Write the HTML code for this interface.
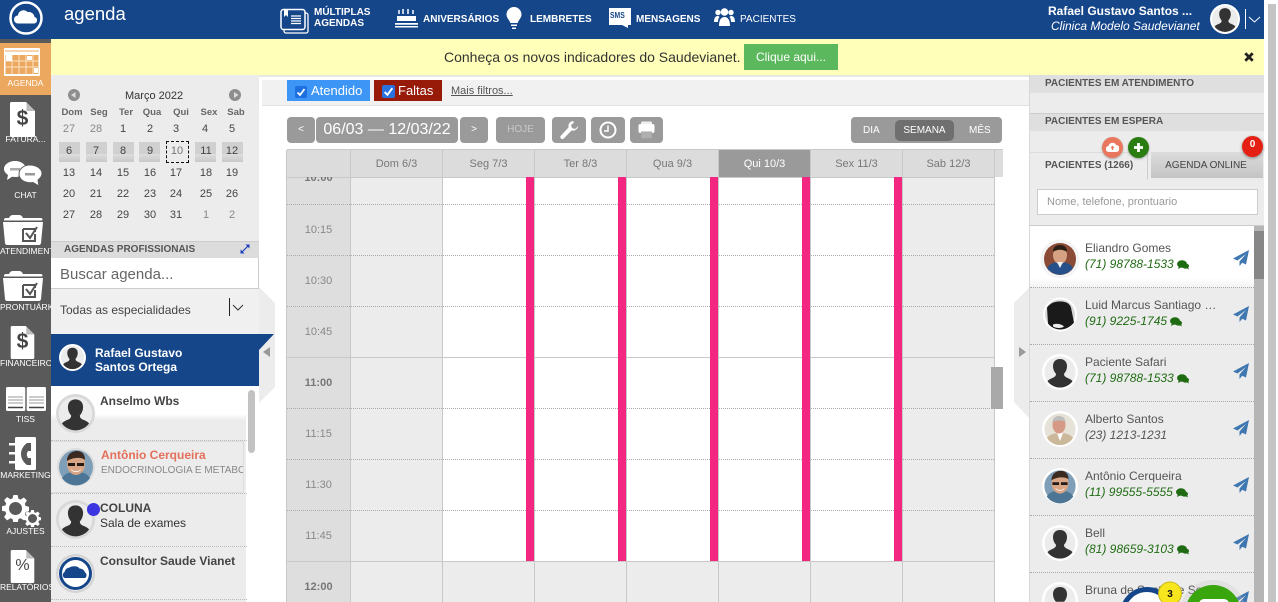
<!DOCTYPE html>
<html lang="pt"><head><meta charset="utf-8"><title>agenda</title>
<style>
*{box-sizing:border-box}
html,body{margin:0;padding:0;width:1278px;height:602px;overflow:hidden;background:#fff;font-family:"Liberation Sans",sans-serif}
div,span,svg{position:absolute}
span{white-space:nowrap}
#root{left:0;top:0;width:1278px;height:602px;overflow:hidden;background:#fff}
.b{font-weight:bold}
.sl{left:0;width:51px;text-align:center;color:#fff;font-size:8.5px;line-height:10px;overflow:hidden;white-space:nowrap}
.nav{color:#fff;font-size:10px;font-weight:bold;line-height:11px}
.c{width:26px;text-align:center;font-size:11px;color:#444;line-height:12px}
.hd{font-weight:bold;font-size:10px;color:#555;line-height:12px}
.wk{background:linear-gradient(#d0d0d0 0,#d0d0d0 60%,#dedede 60%,#c8c8c8);top:142px;height:20px}
.btn{background:#9a9a9a;border-radius:4px;top:117px;height:26px;color:#fff;text-align:center;font-size:10px;line-height:26px}
.th{top:150px;height:27px;padding-top:1px;background:#dcdcdc;color:#777;font-size:11px;text-align:center;line-height:26px;border-right:1px solid #c8c8c8}
.tm{left:287px;width:63px;text-align:center;color:#888;font-size:11px;line-height:12px}
.d{left:287px;width:707px;height:0;border-top:1px dotted #aaa}
.s{left:287px;width:707px;height:1px;background:#c8c8c8}
.v{top:177px;height:425px;width:1px;background:#c8c8c8}
.p{top:177px;width:8px;height:384px;background:#f3277f}
.nm{left:1085px;font-size:12px;color:#555;line-height:13px}
.ph{left:1085px;font-size:12px;font-style:italic;color:#1f6b12;line-height:13px}
.sp{left:1030px;width:224px;height:0;border-top:1px dotted #aaa}
.ls{left:51px;width:196px;height:0;border-top:1px dotted #bbb}
.ln{font-size:12px;line-height:14px}
</style></head><body>
<div id="root">
<svg width="0" height="0" style="left:0;top:0"><defs>
<symbol id="sil" viewBox="0 0 36 36"><circle cx="18" cy="18" r="18" fill="#fff"/><circle cx="18" cy="18" r="15.5" fill="#ececec"/><path d="M18 5c-4.400 0-7 3-7 7 0 3 1.100 5.800 3 7.800 0 2-1 3-3 3.900-2.600 1.100-4.400 1.900-5.500 3.500A15.500 15.500 0 0 0 30.500 27.200c-1.100-1.600-2.900-2.400-5.500-3.500-2-.9-3-1.900-3-3.900 1.900-2 3-4.800 3-7.800 0-4-2.600-7-7-7z" fill="#333"/></symbol>
<symbol id="silg" viewBox="0 0 36 36"><circle cx="18" cy="18" r="18" fill="#d8d8d8"/><circle cx="18" cy="18" r="15.5" fill="#ececec"/><path d="M18 5c-4.400 0-7 3-7 7 0 3 1.100 5.800 3 7.800 0 2-1 3-3 3.900-2.600 1.100-4.400 1.900-5.500 3.500A15.500 15.500 0 0 0 30.500 27.200c-1.100-1.600-2.900-2.400-5.500-3.500-2-.9-3-1.900-3-3.900 1.900-2 3-4.800 3-7.800 0-4-2.600-7-7-7z" fill="#333"/></symbol>
<symbol id="pl" viewBox="0 0 16 16"><path d="M16 0L0 8.500l4.500 2L13 4 6.500 11.500V16l2.700-3.300 3.800 1.800z" fill="#3f77b0"/></symbol>
<symbol id="ch" viewBox="0 0 12 10"><ellipse cx="5" cy="4" rx="5" ry="3.700" fill="#1f6b12"/><path d="M2 6L1 9l4-2zM8 8c2 .3 3 1 4 1.500L11 7z" fill="#1f6b12"/><ellipse cx="8.500" cy="6" rx="3.500" ry="2.600" fill="#1f6b12"/></symbol>
<symbol id="doc" viewBox="0 0 25 35"><path d="M1.500 0H16l9 9v24.500a1.500 1.500 0 0 1-1.500 1.500h-22A1.500 1.500 0 0 1 0 33.500v-32A1.500 1.500 0 0 1 1.500 0z" fill="#fff"/><path d="M16.500 0.500v8.500h8z" fill="#bbb"/></symbol>
<symbol id="fold" viewBox="0 0 40 30"><path d="M1 4.500c0-1 1-1.500 2-1.500h3c1-2 2-3 4-3h6c2 0 3 1 4 3h17c2 0 2.500.7 2.500 1.500L39 5.500H1zM0 7h40l-2 21c0 1-1 2-2 2H4c-1 0-2-1-2-2z" fill="#fff"/><path d="M20 14h12v3M20 14v12h12v-7M23 18l4 5 7-11" fill="none" stroke="#555" stroke-width="2"/></symbol>
<symbol id="gear" viewBox="0 0 32 32"><path d="M13.500 0h5l1 4.500 2.500 1 4-2.500 3.500 3.500-2.500 4 1 2.500 4.500 1v5l-4.500 1-1 2.500 2.500 4-3.500 3.500-4-2.500-2.500 1-1 4.500h-5l-1-4.500-2.500-1-4 2.500L2.500 26l2.500-4-1-2.500L-.5 18.500v-5l4.500-1 1-2.500L2.500 6 6 2.500l4 2.500 2.500-1z" fill="#fff"/></symbol>
</defs></svg>

<!-- right scroll -->
<div style="left:1268px;top:4px;width:8px;height:598px;background:#c4c4c4"></div>

<!-- header -->
<div style="left:0;top:0;width:1264px;height:39px;background:#15468a"></div>
<svg style="left:8px;top:0" width="36" height="36" viewBox="0 0 36 36"><circle cx="18" cy="18" r="15.500" fill="#15468a" stroke="#fff" stroke-width="2.500"/><path d="M10 23.500a4 4 0 0 1 0-8 5.500 5.500 0 0 1 9.500-3.500 6 6 0 0 1 7 5 3.300 3.300 0 0 1-.5 6.500z" fill="#fff"/></svg>
<span style="left:64px;top:3px;color:#fff;font-size:18.5px;line-height:22px">agenda</span>
<svg style="left:280px;top:8px" width="30" height="27" viewBox="0 0 30 27"><rect x="4" y="5" width="24" height="20" rx="2" fill="none" stroke="#fff" stroke-width="1.300"/><rect x="1" y="1.500" width="24" height="20" rx="2.500" fill="#15468a" stroke="#fff" stroke-width="1.500"/><path d="M4 2v7l2-2 2 2V2z" fill="#fff"/><path d="M11 8h10M11 10.500h10M11 13h10M11 15.500h10" stroke="#fff" stroke-width="1.300"/></svg>
<span class="nav" style="left:314px;top:7px">MÚLTIPLAS<br>AGENDAS</span>
<svg style="left:395px;top:8px" width="23" height="20" viewBox="0 0 23 20"><path d="M4 2v4M8 1v5M13 1v5M18 2v4" stroke="#fff" stroke-width="1.500"/><path d="M2 8h19v5H2z" fill="#fff"/><path d="M0 15h23v1.800H0zM0 18h23v1.500H0z" fill="#fff"/></svg>
<span class="nav" style="left:423px;top:14px">ANIVERSÁRIOS</span>
<svg style="left:506px;top:7px" width="16" height="23" viewBox="0 0 16 23"><path d="M8 0a7.500 7.500 0 0 0-7.500 7.500c0 3.500 3 5.500 3.800 8.500h7.400c.8-3 3.800-5 3.800-8.500A7.500 7.500 0 0 0 8 0z" fill="#fff"/><path d="M5 17.500h6V19H5zM6 20.500h4V22H6z" fill="#fff"/></svg>
<span class="nav" style="left:530px;top:14px">LEMBRETES</span>
<div style="left:609px;top:8px;width:22px;height:17px;background:#fff"></div>
<svg style="left:620px;top:24px" width="10" height="4" viewBox="0 0 10 4"><path d="M0 0h8v4z" fill="#fff"/></svg>
<span style="left:610px;top:11px;font-size:8px;line-height:10px;color:#15468a;font-weight:bold;transform:scaleX(.85);transform-origin:0 0">SMS</span>
<span class="nav" style="left:636px;top:14px">MENSAGENS</span>
<svg style="left:714px;top:8px" width="21" height="19" viewBox="0 0 21 19"><circle cx="4" cy="4.500" r="2.700" fill="#fff"/><circle cx="17" cy="4.500" r="2.700" fill="#fff"/><circle cx="10.500" cy="4" r="3.800" fill="#fff"/><path d="M0 14c0-4 1.500-6 3.500-6 1 0 1.500.3 2 1-1 1-1.500 3-1.500 5zM21 14c0-4-1.500-6-3.500-6-1 0-1.500.3-2 1 1 1 1.500 3 1.500 5zM5 18c0-6 2-9 5.500-9s5.500 3 5.500 9z" fill="#fff"/></svg>
<span style="left:740px;top:14px;color:#fff;font-size:10px;line-height:11px">PACIENTES</span>
<span class="b" style="left:1048px;top:5px;color:#fff;font-size:12px;line-height:13px">Rafael Gustavo Santos ...</span>
<span style="left:1051px;top:20px;color:#fff;font-size:12px;font-style:italic;line-height:13px">Clinica Modelo Saudevianet</span>
<svg style="left:1210px;top:4px;width:30px;height:30px"><use href="#sil"/></svg>
<div style="left:1245px;top:9px;width:1px;height:20px;background:#fff"></div>
<svg style="left:1248px;top:16px" width="13" height="7" viewBox="0 0 13 7"><path d="M1 1l5.500 5L12 1" fill="none" stroke="#fff"/></svg>

<!-- notice -->
<div style="left:51px;top:39px;width:1213px;height:36px;background:#ffffb9"></div>
<span style="left:444px;top:49px;font-size:14px;line-height:16px;color:#333">Conheça os novos indicadores do Saudevianet.</span>
<div style="left:744px;top:44px;width:94px;height:26px;background:#5cb85c;color:#fff;font-size:12px;line-height:26px;text-align:center">Clique aqui...</div>
<svg style="left:1244px;top:52px" width="10" height="10" viewBox="0 0 10 10"><path d="M1.300 1.300l7.400 7.400M8.700 1.300L1.300 8.700" stroke="#222" stroke-width="2.800"/></svg>
<div style="left:259px;top:75px;width:771px;height:2px;background:#e8e8e2"></div>

<!-- sidebar -->
<div style="left:0;top:39px;width:51px;height:563px;background:#5a5a5a"></div>
<div style="left:0;top:43px;width:51px;height:52px;background:#eda860"></div>
<svg style="left:4px;top:48px" width="36" height="28" viewBox="0 0 36 28"><rect width="36" height="28" rx="1" fill="#fff"/><rect x="1.500" y="7" width="33" height="19" fill="#eda860"/><path d="M1 3h34" stroke="#eda860"/><path d="M8 7v19M15 7v19M22 7v19M29 7v19M1 13h34M1 19h34" stroke="#fbe2c2" stroke-width="1"/><rect x="2" y="7" width="6" height="6" fill="#fff"/><rect x="23" y="8" width="5" height="4" fill="#fff"/><rect x="30" y="20" width="4" height="5" fill="#fff"/></svg>
<div class="sl" style="top:78px">AGENDA</div>

<svg style="left:10px;top:102px" width="25" height="35"><use href="#doc"/></svg>
<span class="b" style="left:10px;top:106px;width:25px;text-align:center;font-size:21px;line-height:26px;color:#444">$</span>
<div class="sl" style="top:134px">FATURA...</div>

<svg style="left:2px;top:160px" width="42" height="28" viewBox="0 0 42 28"><path d="M13 1c6 0 11 3.500 11 8s-5 8-11 8c-1 0-2 0-3-.2L5 20l1-5c-2-1.500-4-3.500-4-6 0-4.500 5-8 11-8z" fill="#fff"/><rect x="8" y="8" width="10" height="2.500" fill="#aaa"/><path d="M28 5c6.500 0 12 3.700 12 8.500 0 2.800-2 5-4 6.500l1 6-6-3.500c-1 .2-2 .2-3 .2-6.500 0-11-3.800-11-8.700S21.500 5 28 5z" fill="#fff" stroke="#5a5a5a"/><rect x="23" y="13" width="10" height="2.500" fill="#999"/></svg>
<div class="sl" style="top:190px">CHAT</div>

<svg style="left:3px;top:215px" width="40" height="30"><use href="#fold"/></svg>
<div class="sl" style="top:246px">ATENDIMENT</div>
<svg style="left:3px;top:271px" width="40" height="30"><use href="#fold"/></svg>
<div class="sl" style="top:302px">PRONTUÁRK</div>

<svg style="left:10px;top:326px" width="25" height="33"><use href="#doc"/></svg>
<span class="b" style="left:10px;top:329px;width:25px;text-align:center;font-size:21px;line-height:26px;color:#444">$</span>
<div class="sl" style="top:358px">FINANCEIRO</div>

<svg style="left:6px;top:387px" width="40" height="25" viewBox="0 0 40 25"><rect x="0" y="0" width="19.300" height="24" rx="1.500" fill="#fff"/><rect x="20.700" y="0" width="19.300" height="24" rx="1.500" fill="#fff"/><path d="M2 10h15M2 13h15M2 16h15M23 10h15M23 13h15M23 16h15" stroke="#999"/><path d="M2 20.500h15M23 20.500h15" stroke="#444" stroke-width="1.500"/></svg>
<div class="sl" style="top:414px">TISS</div>

<svg style="left:9px;top:437px" width="27" height="33" viewBox="0 0 27 33"><path d="M6 1.500A1.500 1.500 0 0 1 7.500 0h18A1.500 1.500 0 0 1 27 1.500v30a1.500 1.500 0 0 1-1.500 1.500h-18A1.500 1.500 0 0 1 6 31.500z" fill="#fff"/><path d="M0 6h6v2.500H0zM0 15h6v2.500H0zM0 24h6v2.500H0z" fill="#fff"/><path d="M18 6h4v8h-3l-1 2c-.5 2 0 3 1 5h3v7h-4c-4-3-6-7-6-11s2-8 6-11z" fill="#5a5a5a"/></svg>
<div class="sl" style="top:470px">MARKETING</div>

<svg style="left:2px;top:495px" width="27" height="27"><use href="#gear"/></svg>
<div style="left:9px;top:502px;width:13px;height:13px;border-radius:50%;background:#5a5a5a"></div>
<svg style="left:24px;top:510px" width="17" height="17"><use href="#gear"/></svg>
<div style="left:28px;top:514px;width:9px;height:9px;border-radius:50%;background:#5a5a5a"></div>
<div class="sl" style="top:526px">AJUSTES</div>

<svg style="left:10px;top:550px" width="25" height="33"><use href="#doc"/></svg>
<span style="left:10px;top:556px;width:25px;text-align:center;font-size:16px;line-height:20px;color:#444">%</span>
<div class="sl" style="top:582px">RELATÓRIOS</div>

<!-- left panel -->
<div style="left:51px;top:75px;width:208px;height:527px;background:#ececec"></div>
<div style="left:68px;top:89px;width:12px;height:12px;border-radius:50%;background:#8e8e8e"></div>
<svg style="left:71px;top:92px" width="6" height="6" viewBox="0 0 6 6"><path d="M4.500 0v6L0 3z" fill="#ddd"/></svg>
<div style="left:229px;top:89px;width:12px;height:12px;border-radius:50%;background:#8e8e8e"></div>
<svg style="left:233px;top:92px" width="6" height="6" viewBox="0 0 6 6"><path d="M1 0v6l4.500-3z" fill="#ddd"/></svg>
<span style="left:125px;top:90px;font-size:11px;line-height:12px;color:#333">Março 2022</span>

<span class="c b" style="left:59px;top:107px;font-size:9.500px;color:#666">Dom</span><span class="c b" style="left:86px;top:107px;font-size:9.500px;color:#666">Seg</span><span class="c b" style="left:113px;top:107px;font-size:9.500px;color:#666">Ter</span><span class="c b" style="left:139px;top:107px;font-size:9.500px;color:#666">Qua</span><span class="c b" style="left:168px;top:107px;font-size:9.500px;color:#666">Qui</span><span class="c b" style="left:196px;top:107px;font-size:9.500px;color:#666">Sex</span><span class="c b" style="left:223px;top:107px;font-size:9.500px;color:#666">Sab</span>

<span class="c" style="left:56px;top:123px;color:#888">27</span><span class="c" style="left:83px;top:123px;color:#888">28</span><span class="c" style="left:110px;top:123px">1</span><span class="c" style="left:137px;top:123px">2</span><span class="c" style="left:163px;top:123px">3</span><span class="c" style="left:192px;top:123px">4</span><span class="c" style="left:219px;top:123px">5</span>

<div class="wk" style="left:59px;width:21px"></div><div class="wk" style="left:86px;width:21px"></div><div class="wk" style="left:113px;width:21px"></div><div class="wk" style="left:139px;width:21px"></div><div class="wk" style="left:195px;width:21px"></div><div class="wk" style="left:222px;width:21px"></div>
<div style="left:166px;top:141px;width:23px;height:22px;border:1px dashed #111"></div>
<span class="c" style="left:56px;top:145px">6</span><span class="c" style="left:83px;top:145px">7</span><span class="c" style="left:110px;top:145px">8</span><span class="c" style="left:137px;top:145px">9</span><span class="c" style="left:164px;top:145px;color:#777">10</span><span class="c" style="left:193px;top:145px">11</span><span class="c" style="left:219px;top:145px">12</span>

<span class="c" style="left:56px;top:167px">13</span><span class="c" style="left:83px;top:167px">14</span><span class="c" style="left:110px;top:167px">15</span><span class="c" style="left:137px;top:167px">16</span><span class="c" style="left:163px;top:167px">17</span><span class="c" style="left:193px;top:167px">18</span><span class="c" style="left:219px;top:167px">19</span>
<span class="c" style="left:56px;top:188px">20</span><span class="c" style="left:83px;top:188px">21</span><span class="c" style="left:110px;top:188px">22</span><span class="c" style="left:137px;top:188px">23</span><span class="c" style="left:163px;top:188px">24</span><span class="c" style="left:193px;top:188px">25</span><span class="c" style="left:219px;top:188px">26</span>
<span class="c" style="left:56px;top:209px">27</span><span class="c" style="left:83px;top:209px">28</span><span class="c" style="left:110px;top:209px">29</span><span class="c" style="left:137px;top:209px">30</span><span class="c" style="left:163px;top:209px">31</span><span class="c" style="left:193px;top:209px;color:#888">1</span><span class="c" style="left:219px;top:209px;color:#888">2</span>

<div style="left:51px;top:241px;width:208px;height:17px;background:#dcdcdc;border-top:1px solid #ccc"></div>
<span class="hd" style="left:64px;top:244px">AGENDAS PROFISSIONAIS</span>
<svg style="left:240px;top:244px" width="10" height="10" viewBox="0 0 10 10"><path d="M1 9l8-8" stroke="#1c3fbf" stroke-width="1.200"/><path d="M5.500 0.500H9.500V4.500zM0.500 5.500V9.500H4.500z" fill="#1c3fbf"/></svg>
<div style="left:51px;top:258px;width:208px;height:31px;background:#fff;border-bottom:1px solid #ccc;border-right:1px solid #ccc"></div>
<span style="left:60px;top:266px;font-size:15px;line-height:17px;color:#666">Buscar agenda...</span>
<div style="left:51px;top:289px;width:208px;height:45px;background:#f0f0f0"></div>
<span style="left:60px;top:303px;font-size:12px;line-height:14px;color:#444">Todas as especialidades</span>
<div style="left:229px;top:298px;width:1px;height:18px;background:#222"></div>
<svg style="left:232px;top:304px" width="12" height="7" viewBox="0 0 12 7"><path d="M1 1l5 5 5-5" fill="none" stroke="#333"/></svg>

<!-- handles -->
<svg style="left:259px;top:287px" width="17" height="130" viewBox="0 0 17 130"><path d="M0 0L16 16V100L0 116z" fill="#ececec"/></svg>
<svg style="left:1014px;top:287px" width="16" height="132" viewBox="0 0 16 132"><path d="M16 0L0 16V115L16 132z" fill="#ececec"/></svg>
<svg style="left:1018px;top:347px" width="9" height="10" viewBox="0 0 9 10"><path d="M1 0l7 5-7 5z" fill="#999"/></svg>

<!-- list -->
<div style="left:51px;top:334px;width:208px;height:52px;background:#15468a"></div>
<svg style="left:259px;top:334px" width="15" height="16" viewBox="0 0 15 16"><path d="M0 0h15L0 16z" fill="#15468a"/></svg>
<svg style="left:263px;top:347px" width="8" height="10" viewBox="0 0 8 10"><path d="M7 0L0 5l7 5z" fill="#999"/></svg>
<svg style="left:59px;top:344px;width:27px;height:27px"><use href="#sil"/></svg>
<span class="b ln" style="left:95px;top:346px;color:#fff">Rafael Gustavo<br>Santos Ortega</span>

<div style="left:51px;top:386px;width:208px;height:216px;background:#fff"></div>
<div style="left:51px;top:386px;width:195px;height:216px;background:linear-gradient(#fff 0,#fff 28px,#ececec 34px)"></div>
<div style="left:248px;top:390px;width:7px;height:63px;background:#c2c2c2;border-radius:4px"></div>
<svg style="left:56px;top:394px;width:39px;height:39px"><use href="#silg"/></svg>
<span class="b ln" style="left:100px;top:394px;color:#444">Anselmo Wbs</span>
<div class="ls" style="top:440px"></div>

<div style="left:51px;top:441px;width:193px;height:52px;border:1px solid #ddd;border-left:0;background:#ececec"></div>
<svg style="left:57px;top:448px" width="38" height="38" viewBox="0 0 38 38"><circle cx="19" cy="19" r="19" fill="#ddd"/><circle cx="19" cy="19" r="17" fill="#7f9fb8"/><path d="M5 30c3-5 8-6 14-6s11 1 14 6a17 17 0 0 1-28 0z" fill="#4d7596"/><ellipse cx="19" cy="16" rx="9" ry="11" fill="#d8a585"/><path d="M10 13c0-7 5-10 10-10s8 3 8 9c-3-3-12-3-18 1z" fill="#3a2a20"/><path d="M11 15h7v3h-7zM20 15h7v3h-7z" fill="#221a16"/><path d="M14 21c3 3 7 3 10 0-1 4-9 4-10 0z" fill="#fff"/></svg>
<span class="b ln" style="left:101px;top:448px;color:#e46f5a">Antônio Cerqueira</span>
<div style="left:101px;top:464px;width:142px;height:14px;overflow:hidden"><span style="left:0;top:0;font-size:10px;line-height:14px;color:#888">ENDOCRINOLOGIA E METABOLOGIA</span></div>
<div class="ls" style="top:493px"></div>
<svg style="left:56px;top:500px;width:39px;height:39px"><use href="#silg"/></svg>
<div style="left:87px;top:503px;width:13px;height:13px;border-radius:50%;background:#3b36e0"></div>
<span class="b ln" style="left:100px;top:501px;color:#444">COLUNA</span>
<span class="ln" style="left:100px;top:516px;color:#333">Sala de exames</span>
<div class="ls" style="top:546px"></div>
<svg style="left:56px;top:554px" width="39" height="39" viewBox="0 0 39 39"><circle cx="19.500" cy="19.500" r="19.500" fill="#d4d4d4"/><circle cx="19.500" cy="19.500" r="17" fill="#fff"/><circle cx="19.500" cy="19.500" r="15" fill="none" stroke="#15468a" stroke-width="3"/><path d="M8.500 24a3.500 3.500 0 0 1 0-6 6 6 0 0 1 5-4.500c2-1.500 8-2 10 1 3 0 5 2 5.500 4 2 .5 2 5 0 5.500z" fill="#15468a"/></svg>
<span class="b ln" style="left:100px;top:554px;color:#444">Consultor Saude Vianet</span>
<div class="ls" style="top:599px"></div>

<!-- filter -->
<div style="left:262px;top:80px;width:768px;height:26px;background:#f1f1f1;border-bottom:1px solid #e2e2e2"></div>
<div style="left:287px;top:80px;width:83px;height:21px;background:#3d96f5"></div>
<div style="left:295px;top:86px;width:12px;height:12px;border-radius:2px;background:#1e6fe0"></div>
<svg style="left:296px;top:87px" width="10" height="10" viewBox="0 0 10 10"><path d="M1.500 5.500l2.500 2.500 4.500-6" fill="none" stroke="#fff" stroke-width="1.800"/></svg>
<span style="left:311px;top:83px;color:#fff;font-size:13px;line-height:15px">Atendido</span>
<div style="left:374px;top:80px;width:68px;height:21px;background:#981a09"></div>
<div style="left:382px;top:85px;width:13px;height:13px;border-radius:2px;background:#2a72e0"></div>
<svg style="left:383px;top:86px" width="11" height="11" viewBox="0 0 10 10"><path d="M1.500 5.500l2.500 2.500 4.500-6" fill="none" stroke="#fff" stroke-width="1.800"/></svg>
<span style="left:398px;top:83px;color:#fff;font-size:13px;line-height:15px">Faltas</span>
<span style="left:451px;top:85px;font-size:11px;line-height:13px;color:#555;text-decoration:underline">Mais filtros...</span>

<!-- toolbar -->
<div class="btn" style="left:287px;width:28px">&lt;</div>
<div class="btn" style="left:316px;width:142px;font-size:16px">06/03 — 12/03/22</div>
<div class="btn" style="left:460px;width:28px">&gt;</div>
<div class="btn" style="left:496px;width:49px;color:#c8c8c8">HOJE</div>
<div class="btn" style="left:552px;width:34px"></div>
<svg style="left:559px;top:120px" width="21" height="20" viewBox="0 0 21 20"><path d="M13 1c-3 .5-5 3-4.500 6.500L1 15.500c-1 1.200-1 2 0 3s2 .8 3-.2l7.500-7.800c3.500.7 6-1.200 6.800-4.500L15 9l-3-1-1-3 3-2.500z" fill="#fff" transform="translate(1)"/></svg>
<div class="btn" style="left:591px;width:34px"></div>
<svg style="left:599px;top:121px" width="18" height="18" viewBox="0 0 18 18"><circle cx="9" cy="9" r="7.500" fill="none" stroke="#fff" stroke-width="2"/><path d="M9 4.500V10H5" fill="none" stroke="#fff" stroke-width="1.500"/></svg>
<div class="btn" style="left:630px;width:33px"></div>
<svg style="left:638px;top:121px" width="17" height="18" viewBox="0 0 17 18"><rect x="3" y="0.500" width="11" height="5" rx="1.500" fill="#f0f0f0"/><rect x="0.500" y="3" width="16" height="9" rx="2" fill="#fff"/><rect x="3.500" y="11" width="10" height="6" fill="#b0b0b0" stroke="#aaa"/></svg>

<div class="btn" style="left:851px;width:151px"></div>
<div class="btn" style="left:895px;width:59px;top:120px;height:21px;line-height:21px;background:#6f6f6f;border-radius:5px">SEMANA</div>
<span style="left:863px;top:125px;color:#fff;font-size:10px;line-height:12px">DIA</span>
<span style="left:969px;top:125px;color:#fff;font-size:10px;line-height:12px">MÊS</span>

<!-- grid -->
<div style="left:287px;top:177px;width:63px;height:425px;background:#dedede"></div>
<div style="left:351px;top:177px;width:92px;height:425px;background:#ececec"></div>
<div style="left:903px;top:177px;width:92px;height:425px;background:#ececec"></div>
<div style="left:443px;top:561px;width:460px;height:41px;background:#ececec"></div>

<div class="th" style="left:287px;width:64px"></div>
<div class="th" style="left:351px;width:92px">Dom 6/3</div>
<div class="th" style="left:443px;width:92px">Seg 7/3</div>
<div class="th" style="left:535px;width:92px">Ter 8/3</div>
<div class="th" style="left:627px;width:92px">Qua 9/3</div>
<div class="th" style="left:719px;width:92px;background:#9a9a9a;color:#fff">Qui 10/3</div>
<div class="th" style="left:811px;width:92px">Sex 11/3</div>
<div class="th" style="left:903px;width:92px">Sab 12/3</div>
<div class="th" style="left:995px;width:8px;border-right:0"></div>
<div style="left:286px;top:150px;width:1px;height:452px;background:#c8c8c8"></div>
<div style="left:287px;top:149px;width:716px;height:1px;background:#c8c8c8"></div>
<div style="left:287px;top:177px;width:707px;height:1px;background:#c8c8c8"></div>

<div class="d" style="top:204px"></div><div class="d" style="top:255px"></div><div class="d" style="top:306px"></div><div class="s" style="top:357px"></div><div class="d" style="top:408px"></div><div class="d" style="top:459px"></div><div class="d" style="top:510px"></div><div class="s" style="top:561px"></div>

<div class="v" style="left:350px"></div><div class="v" style="left:442px"></div><div class="v" style="left:534px"></div><div class="v" style="left:626px"></div><div class="v" style="left:718px"></div><div class="v" style="left:810px"></div><div class="v" style="left:902px"></div><div class="v" style="left:994px"></div>

<div class="p" style="left:526px"></div><div class="p" style="left:618px"></div><div class="p" style="left:710px"></div><div class="p" style="left:802px"></div><div class="p" style="left:894px"></div>

<div style="left:287px;top:177px;width:63px;height:7px;overflow:hidden"><span class="b" style="left:0;top:-5px;width:63px;text-align:center;color:#777;font-size:11px;line-height:12px">10:00</span></div>
<span class="tm" style="top:224px">10:15</span>
<span class="tm" style="top:275px">10:30</span>
<span class="tm" style="top:326px">10:45</span>
<span class="tm b" style="top:377px;color:#777">11:00</span>
<span class="tm" style="top:428px">11:15</span>
<span class="tm" style="top:479px">11:30</span>
<span class="tm" style="top:530px">11:45</span>
<span class="tm b" style="top:581px;color:#777">12:00</span>

<div style="left:991px;top:367px;width:12px;height:42px;background:#a9a9a9"></div>

<!-- right panel -->
<div style="left:1029px;top:75px;width:1px;height:527px;background:#d8d8d8"></div>
<div style="left:1030px;top:75px;width:234px;height:527px;background:#ececec"></div>
<div style="left:1030px;top:75px;width:234px;height:18px;background:#dfdfdf"></div>
<span class="hd" style="left:1045px;top:78px">PACIENTES EM ATENDIMENTO</span>
<div style="left:1030px;top:113px;width:234px;height:18px;background:#dfdfdf;border-top:1px solid #ccc"></div>
<span class="hd" style="left:1045px;top:116px">PACIENTES EM ESPERA</span>
<div style="left:1030px;top:152px;width:117px;height:1px;background:#ddd"></div>
<div style="left:1147px;top:152px;width:1px;height:27px;background:#ccc"></div>
<span class="hd" style="left:1045px;top:160px">PACIENTES (1266)</span>
<div style="left:1151px;top:152px;width:112px;height:26px;padding-right:2px;background:linear-gradient(#dcdcdc,#c4c4c4);color:#444;font-size:10px;text-align:center;line-height:28px">AGENDA ONLINE</div>
<div style="left:1102px;top:137px;width:21px;height:21px;border-radius:50%;background:#e8775d;box-shadow:0 1px 2px rgba(0,0,0,.3)"></div>
<svg style="left:1106px;top:142px" width="13" height="11" viewBox="0 0 13 11"><path d="M3 10a3 3 0 0 1-.5-6A4 4 0 0 1 10 3a3.500 3.500 0 0 1 0 7z" fill="#fff"/><path d="M6.500 3.500L4.500 6h1.200v2h1.600V6h1.200z" fill="#e8775d"/></svg>
<div style="left:1128px;top:137px;width:21px;height:21px;border-radius:50%;background:#2a7d10;box-shadow:0 1px 2px rgba(0,0,0,.3)"></div>
<svg style="left:1133px;top:142px" width="11" height="11" viewBox="0 0 11 11"><path d="M5.500 1v9M1 5.500h9" stroke="#fff" stroke-width="2.800"/></svg>
<div style="left:1242px;top:136px;width:21px;height:21px;border-radius:50%;background:#e32013;box-shadow:0 1px 3px rgba(0,0,0,.4);color:#fff;font-size:10px;font-weight:bold;text-align:center;line-height:18px">0</div>
<div style="left:1037px;top:189px;width:221px;height:26px;background:#fff;border:1px solid #ccc"></div>
<span style="left:1047px;top:196px;font-size:11px;line-height:13px;color:#999">Nome, telefone, prontuario</span>

<div style="left:1030px;top:225px;width:224px;height:62px;background:linear-gradient(#fff 0,#fff 85%,#f3f3f3)"></div>
<div style="left:1030px;top:225px;width:234px;height:1px;background:#ccc"></div>
<div style="left:1254px;top:226px;width:10px;height:376px;background:#b5b5b5"></div>
<div style="left:1254px;top:231px;width:10px;height:48px;background:#878787"></div>
<div class="sp" style="top:287px"></div><div class="sp" style="top:344px"></div><div class="sp" style="top:401px"></div><div class="sp" style="top:458px"></div><div class="sp" style="top:515px"></div><div class="sp" style="top:572px"></div>

<!-- row 1 -->
<svg style="left:1040px;top:239px" width="40" height="40" viewBox="0 0 40 40"><circle cx="20" cy="20" r="19.500" fill="#f4f4f4"/><circle cx="20" cy="20" r="16" fill="#8a4a35"/><path d="M7 29c3-5 8-6 13-6s10 1 13 6a16 16 0 0 1-26 0z" fill="#27508a"/><ellipse cx="20" cy="16" rx="7" ry="9" fill="#d6a283"/><path d="M13 13c0-5 3-7 7-7s7 2 7 7c-4-3-10-3-14 0z" fill="#2a1d14"/><path d="M17 23l3 6 3-6z" fill="#f0f0f0"/></svg>
<span class="nm" style="top:242px">Eliandro Gomes</span>
<span class="ph" style="top:258px">(71) 98788-1533</span>
<svg style="left:1177px;top:260px" width="12" height="10"><use href="#ch"/></svg>
<!-- row 2 -->
<svg style="left:1043px;top:297px" width="34" height="35" viewBox="0 0 34 34"><circle cx="17" cy="17" r="17" fill="#fff"/><circle cx="17" cy="17" r="15" fill="#d8d8d8"/><path d="M4 10c4-5 8-6 13-6s9 1 11 6l3 15c-4 5-9 7-14 7-4 0-9-2-12-6z" fill="#1a1a1a"/><path d="M10 27c3-1 8-1 11 2-2 2-8 2-11 0z" fill="#eee"/></svg>
<span class="nm" style="top:299px">Luid Marcus Santiago …</span>
<span class="ph" style="top:315px">(91) 9225-1745</span>
<svg style="left:1170px;top:317px" width="12" height="10"><use href="#ch"/></svg>
<!-- row 3 -->
<svg style="left:1042px;top:354px;width:36px;height:36px"><use href="#sil"/></svg>
<span class="nm" style="top:356px">Paciente Safari</span>
<span class="ph" style="top:372px">(71) 98788-1533</span>
<svg style="left:1177px;top:374px" width="12" height="10"><use href="#ch"/></svg>
<!-- row 4 -->
<svg style="left:1042px;top:411px" width="36" height="36" viewBox="0 0 36 36"><circle cx="18" cy="18" r="18" fill="#fff"/><circle cx="18" cy="18" r="15.500" fill="#e6e2d8"/><path d="M5 27c3-4 8-5 13-5s10 1 13 5a15.500 15.500 0 0 1-26 0z" fill="#cbb79a"/><path d="M15 22l3 8 3-8z" fill="#fff"/><ellipse cx="17" cy="14" rx="6.500" ry="8.500" fill="#d49a85"/><path d="M10.500 11c0-4 3-6 6.500-6s6.500 2 6.500 6c-3-2-10-2-13 0z" fill="#bdbdbd"/></svg>
<span class="nm" style="top:413px">Alberto Santos</span>
<span class="ph" style="top:429px;color:#555">(23) 1213-1231</span>
<!-- row 5 -->
<svg style="left:1042px;top:468px" width="36" height="36" viewBox="0 0 38 38"><circle cx="19" cy="19" r="19" fill="#fff"/><circle cx="19" cy="19" r="16.500" fill="#7f9fb8"/><path d="M5 30c3-5 8-6 14-6s11 1 14 6a17 17 0 0 1-28 0z" fill="#4d7596"/><ellipse cx="19" cy="16" rx="9" ry="11" fill="#d8a585"/><path d="M10 13c0-7 5-10 10-10s8 3 8 9c-3-3-12-3-18 1z" fill="#3a2a20"/><path d="M11 15h7v3h-7zM20 15h7v3h-7z" fill="#221a16"/><path d="M14 21c3 3 7 3 10 0-1 4-9 4-10 0z" fill="#fff"/></svg>
<span class="nm" style="top:470px">Antônio Cerqueira</span>
<span class="ph" style="top:486px">(11) 99555-5555</span>
<svg style="left:1176px;top:488px" width="12" height="10"><use href="#ch"/></svg>
<!-- row 6 -->
<svg style="left:1042px;top:525px;width:36px;height:36px"><use href="#sil"/></svg>
<span class="nm" style="top:527px">Bell</span>
<span class="ph" style="top:543px">(81) 98659-3103</span>
<svg style="left:1177px;top:545px" width="12" height="10"><use href="#ch"/></svg>
<!-- row 7 -->
<svg style="left:1042px;top:582px" width="36" height="20" viewBox="0 0 36 20"><circle cx="18" cy="18" r="18" fill="#fff"/><circle cx="18" cy="18" r="15.500" fill="#ececec"/><path d="M18 5c-4.400 0-7 3-7 7 0 3 1.100 5.800 3 7.800h8c1.900-2 3-4.800 3-7.800 0-4-2.600-7-7-7z" fill="#333"/></svg>
<span class="nm" style="top:584px">Bruna de Santos e Souza</span>

<svg style="left:1233px;top:250px" width="16" height="16"><use href="#pl"/></svg>
<svg style="left:1233px;top:306px" width="16" height="16"><use href="#pl"/></svg>
<svg style="left:1233px;top:363px" width="16" height="16"><use href="#pl"/></svg>
<svg style="left:1233px;top:420px" width="16" height="16"><use href="#pl"/></svg>
<svg style="left:1233px;top:477px" width="16" height="16"><use href="#pl"/></svg>
<svg style="left:1233px;top:534px" width="16" height="16"><use href="#pl"/></svg>
<svg style="left:1233px;top:591px" width="16" height="11" viewBox="0 0 16 11"><path d="M16 0L0 8.500l4.500 2L13 4 6.500 11.500V16l2.700-3.300 3.800 1.800z" fill="#3f77b0"/></svg>

<!-- floating -->
<svg style="left:1115px;top:578px" width="140" height="24" viewBox="0 0 140 24"><circle cx="32" cy="36" r="24.500" fill="#fff" stroke="#15468a" stroke-width="5"/><circle cx="55" cy="15.500" r="11.500" fill="#f7e51d" stroke="#c9b81a"/><text x="55" y="19" text-anchor="middle" font-family="Liberation Sans, sans-serif" font-size="10" font-weight="bold" fill="#111">3</text><circle cx="98" cy="35" r="33" fill="#bebebe" fill-opacity=".25"/><circle cx="98" cy="35" r="28" fill="#3aa60e"/><rect x="84" y="21" width="30" height="20" rx="5" fill="#fff"/></svg>
</div>
</body></html>
